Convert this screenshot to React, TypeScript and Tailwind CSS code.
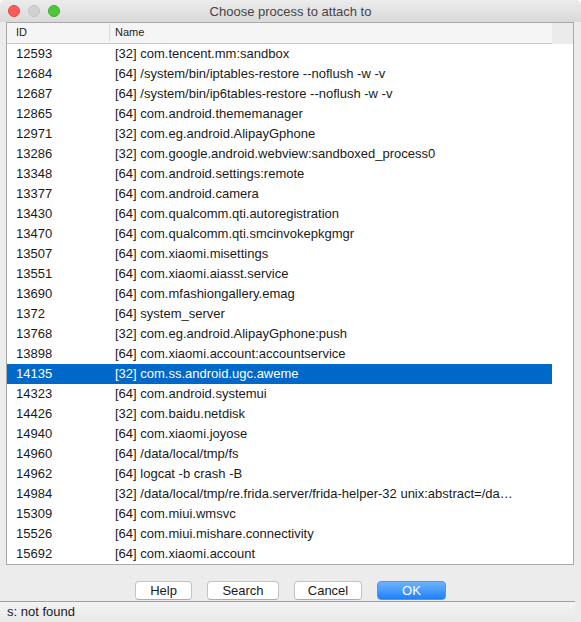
const rows: [string, string][] = [
  ["12593", "[32] com.tencent.mm:sandbox"],
  ["12684", "[64] /system/bin/iptables-restore --noflush -w -v"],
  ["12687", "[64] /system/bin/ip6tables-restore --noflush -w -v"],
  ["12865", "[64] com.android.thememanager"],
  ["12971", "[32] com.eg.android.AlipayGphone"],
  ["13286", "[32] com.google.android.webview:sandboxed_process0"],
  ["13348", "[64] com.android.settings:remote"],
  ["13377", "[64] com.android.camera"],
  ["13430", "[64] com.qualcomm.qti.autoregistration"],
  ["13470", "[64] com.qualcomm.qti.smcinvokepkgmgr"],
  ["13507", "[64] com.xiaomi.misettings"],
  ["13551", "[64] com.xiaomi.aiasst.service"],
  ["13690", "[64] com.mfashiongallery.emag"],
  ["1372", "[64] system_server"],
  ["13768", "[32] com.eg.android.AlipayGphone:push"],
  ["13898", "[64] com.xiaomi.account:accountservice"],
  ["14135", "[32] com.ss.android.ugc.aweme"],
  ["14323", "[64] com.android.systemui"],
  ["14426", "[32] com.baidu.netdisk"],
  ["14940", "[64] com.xiaomi.joyose"],
  ["14960", "[64] /data/local/tmp/fs"],
  ["14962", "[64] logcat -b crash -B"],
  ["14984", "[32] /data/local/tmp/re.frida.server/frida-helper-32 unix:abstract=/da…"],
  ["15309", "[64] com.miui.wmsvc"],
  ["15526", "[64] com.miui.mishare.connectivity"],
  ["15692", "[64] com.xiaomi.account"],
];

const selected = "14135";

const Button = ({ label, className }: { label: string; className: string }) => (
  <button
    className={
      "h-[19px] rounded-[4px] border border-[#c3c3c3] border-b-[#acacac] bg-white text-[13px] leading-none text-[#1a1a1a] " +
      className
    }
  >
    {label}
  </button>
);

const App = () => {
  return (
    <div className="w-[581px] h-[622px] bg-white overflow-hidden" style={{ fontFamily: '"Liberation Sans", Arial, sans-serif' }}>
      <div className="flex flex-col w-full h-full bg-[#ececec] rounded-t-[5px] overflow-hidden">
        {/* Title bar */}
        <div className="relative flex items-center h-[22px] bg-gradient-to-b from-[#ececec] to-[#d9d9d9]">
          <div className="absolute left-[8px] top-[5px] flex gap-[8px]">
            <span className="w-[12px] h-[12px] rounded-full bg-[#fc5b57] border border-[#e1463f]" />
            <span className="w-[12px] h-[12px] rounded-full bg-[#d0d0d0] border border-[#c2c2c2]" />
            <span className="w-[12px] h-[12px] rounded-full bg-[#50c53a] border border-[#3fae2c]" />
          </div>
          <div className="w-full text-center text-[13px] text-[#444] leading-none pt-[1px]">
            Choose process to attach to
          </div>
        </div>

        {/* Table */}
        <div className="ml-[6px] mr-[7px] h-[544px] border border-[#a8a8a8] bg-white flex">
          <div className="w-[545px] flex flex-col">
            <div className="flex h-[21px] bg-[#f5f5f5] border-b border-[#c8c8c8] text-[11px] text-[#1e1e1e] items-center">
              <div className="w-[103px] pl-[9px] border-r border-[#d8d8d8] h-[17px] flex items-center">ID</div>
              <div className="pl-[5px]">Name</div>
            </div>
            {rows.map(([id, name]) => {
              const sel = id === selected;
              return (
                <div
                  key={id}
                  className={
                    sel
                      ? "flex h-[20px] items-center text-[13px] bg-[#0068c9] text-white"
                      : "flex h-[20px] items-center text-[13px] text-[#1a1a1a]"
                  }
                >
                  <div className="w-[103px] pl-[9px] shrink-0">{id}</div>
                  <div className="pl-[5px] w-[442px] overflow-hidden whitespace-nowrap">{name}</div>
                </div>
              );
            })}
          </div>
          <div className="flex-1 flex flex-col">
            <div className="h-[21px] bg-[#ebebeb]" />
          </div>
        </div>

        {/* Buttons */}
        <div className="flex mt-[16px] h-[19px] pl-[135px] gap-[15px]">
          <Button label="Help" className="w-[57px]" />
          <Button label="Search" className="w-[72px]" />
          <Button label="Cancel" className="w-[68px]" />
          <button className="w-[69px] h-[19px] rounded-[4px] bg-gradient-to-b from-[#6cb3fa] to-[#1b80fa] border border-[#4a98f5] text-[13px] leading-none text-white">
            OK
          </button>
        </div>

        {/* Status bar */}
        <div className="mt-[1px] flex-1 border-t border-[#9f9f9f] bg-gradient-to-b from-[#f3f3f3] to-[#e9e9e9] mr-[6px] flex items-center pl-[7px] pb-[1px] text-[13px] text-[#1a1a1a]">
          s: not found
        </div>
      </div>
    </div>
  );
};

export default App;
